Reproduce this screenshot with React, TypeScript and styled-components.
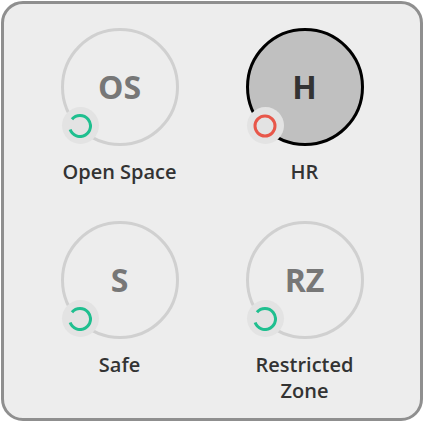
import React from 'react';
import styled, { createGlobalStyle } from 'styled-components';

const GlobalStyle = createGlobalStyle`
  html, body {
    margin: 0;
    padding: 0;
    background: #ffffff;
  }
  body {
    font-family: "Open Sans", "Liberation Sans", sans-serif;
  }
`;

const Frame = styled.div`
  padding: 1px 3px 3px 1px;
  width: 426px;
  height: 424px;
  box-sizing: border-box;
`;

const Panel = styled.section`
  box-sizing: border-box;
  width: 422px;
  height: 420px;
  border: 3px solid #8f8f8f;
  border-radius: 22px;
  background: #ededed;
  display: grid;
  grid-template-columns: 185px 185px;
  justify-content: center;
  align-content: start;
  row-gap: 36px;
  padding-top: 24px;
`;

const Zone = styled.div`
  display: flex;
  flex-direction: column;
  align-items: center;
  gap: 13px;
`;

const Ring = styled.div<{ $active?: boolean }>`
  position: relative;
  box-sizing: border-box;
  width: 118px;
  height: 118px;
  border-radius: 50%;
  border: 3px solid ${(p) => (p.$active ? '#000000' : '#d0d0d0')};
  background: ${(p) => (p.$active ? '#c0c0c0' : 'transparent')};
  display: flex;
  align-items: center;
  justify-content: center;
`;

const Initials = styled.span<{ $active?: boolean }>`
  font-size: 32px;
  font-weight: 700;
  color: ${(p) => (p.$active ? '#333333' : '#777777')};
  line-height: 1;
`;

const Badge = styled.div`
  position: absolute;
  left: -2px;
  bottom: -1px;
  width: 37px;
  height: 37px;
  border-radius: 50%;
  background: #e3e3e3;
  display: flex;
  align-items: center;
  justify-content: center;
`;

const Label = styled.div`
  font-size: 20px;
  font-weight: 600;
  line-height: 26px;
  color: #333333;
  text-align: center;
  max-width: 130px;
`;

type Status = 'ok' | 'alert';

function StatusIcon({ status }: { status: Status }) {
  if (status === 'alert') {
    return (
      <svg width="24" height="24" viewBox="0 0 24 24">
        <circle cx="12" cy="12" r="10" fill="none" stroke="#e8574a" strokeWidth="3" />
      </svg>
    );
  }
  return (
    <svg width="24" height="24" viewBox="0 0 24 24">
      <path
        d="M3.96 5.25 A10.5 10.5 0 1 1 2.13 15.59"
        fill="none"
        stroke="#1fbf8f"
        strokeWidth="3"
      />
    </svg>
  );
}

const zones: { initials: string; name: string; status: Status; active?: boolean }[] = [
  { initials: 'OS', name: 'Open Space', status: 'ok' },
  { initials: 'H', name: 'HR', status: 'alert', active: true },
  { initials: 'S', name: 'Safe', status: 'ok' },
  { initials: 'RZ', name: 'Restricted Zone', status: 'ok' },
];

export default function App() {
  return (
    <>
      <GlobalStyle />
      <Frame>
        <Panel>
          {zones.map((z) => (
            <Zone key={z.initials}>
              <Ring $active={z.active}>
                <Initials $active={z.active}>{z.initials}</Initials>
                <Badge>
                  <StatusIcon status={z.status} />
                </Badge>
              </Ring>
              <Label>{z.name}</Label>
            </Zone>
          ))}
        </Panel>
      </Frame>
    </>
  );
}
